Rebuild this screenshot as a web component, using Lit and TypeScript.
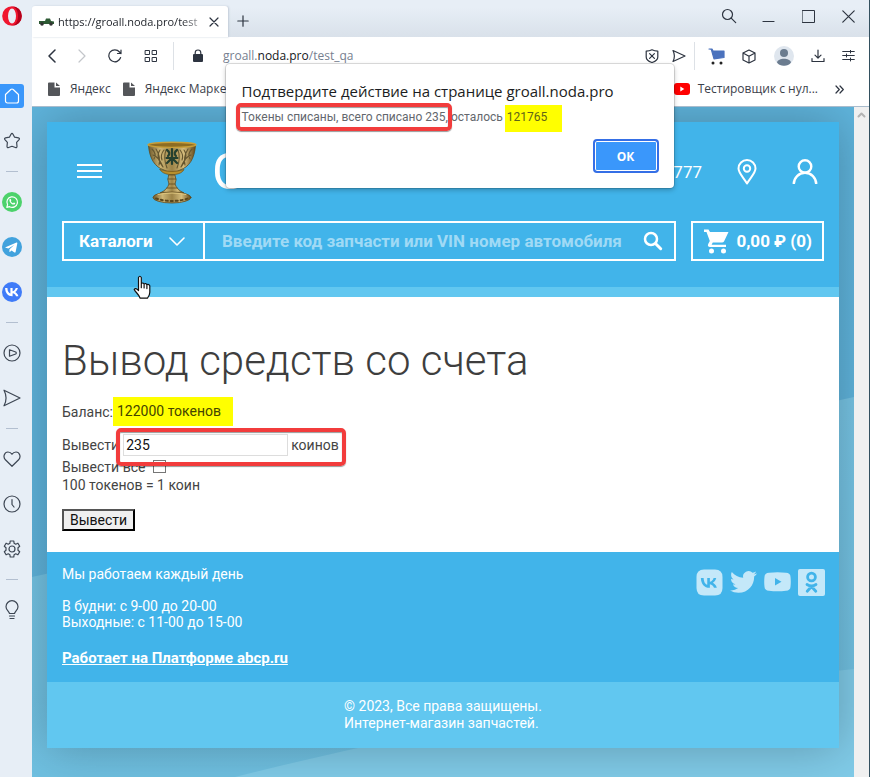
import { LitElement, html, css, svg, nothing } from "lit";
import { customElement, state } from "lit/decorators.js";

/* ---------- icons ---------- */

const icon = (w: number, h: number, body: unknown, box = `0 0 ${w} ${h}`) => html`
  <svg class="icon" width=${w} height=${h} viewBox=${box} fill="none" stroke="currentColor"
    stroke-width="1.2" stroke-linecap="round" stroke-linejoin="round" aria-hidden="true">${body}</svg>`;

const vkGlyph = svg`<path stroke="none" fill="currentColor" d="M9.6 14.4C5.2 14.4 2.500 11.300 2.400 6.200h2.300c.1 3.700 1.700 5.300 3 5.600V6.200h2.200v3.200c1.300-.1 2.700-1.600 3.100-3.200h2.200c-.3 1.900-1.800 3.400-2.800 4 1 .5 2.700 1.800 3.300 4.200h-2.400c-.5-1.500-1.700-2.700-3.400-2.900v2.900z"/>`;

const icons = {
  opera: icon(20, 20, svg`<ellipse cx="10" cy="10" rx="9.800" ry="9.800" fill="#f0162f" stroke="none"/><path d="M10 .2a9.800 9.800 0 0 1 0 19.600c4-1 6-5 6-9.800S14 1.200 10 .2z" fill="#b3001b" stroke="none"/><ellipse cx="10" cy="10" rx="4" ry="7.600" fill="#e7eef6" stroke="none"/>`),
  home: icon(24, 24, svg`<path d="M5.500 10.500 10.800 5.500q1.200-1 2.400 0l5.300 5v6.500a2 2 0 0 1-2 2h-9a2 2 0 0 1-2-2z"/>`),
  star: icon(18, 18, svg`<path d="M8 2.200q1-1.600 2 0l1.600 3 3.900.7q1.500.4.600 1.700l-2.500 2.700.4 4q0 1.800-1.600 1.200L9 14.300l-3.400 1.200q-1.600.6-1.600-1.200l.4-4-2.500-2.700q-.9-1.300.6-1.700l3.900-.7z"/>`),
  whatsapp: icon(20, 20, svg`<circle cx="10" cy="10" r="10" fill="#4cd26b" stroke="none"/><path stroke="#fff" d="m4.800 15.400.8-2.700a5.300 5.300 0 1 1 2 2z"/><path fill="#fff" stroke="none" d="M7.600 7.200c.5-.6 1-.4 1.200.1l.5 1c0 .4-.4.700-.5.900.5 1 1.200 1.500 2.100 2 .3 0 .6-.8.900-.8l1.300.6c.3.300 0 1.200-.8 1.500-2.300.7-5.600-2.600-4.700-5.300z"/>`),
  telegram: icon(20, 20, svg`<circle cx="10" cy="10" r="10" fill="#41a2dd" stroke="none"/><path fill="#fff" stroke="none" d="m3.500 10.200 11-4.700c.7-.2 1 .1.800.9l-1.700 8.500c-.2.700-.6.800-1.200.5l-2.800-2-1.500 1.400c-.4.300-.7.200-.7-.3l.1-2.200 4.700-4.300-5.800 3.600-2.600-.8c-.6-.2-.6-.4-.3-.6z"/>`),
  vk: icon(20, 20, svg`<circle cx="10" cy="10" r="10" fill="#3f7bf8" stroke="none"/><g color="#fff" transform="translate(.7 -.2)">${vkGlyph}</g>`),
  play: icon(18, 18, svg`<circle cx="9" cy="9" r="8"/><path d="M6.500 5.800v6.400l6.200-2.200q1.200-1 0-2z"/>`),
  send: icon(18, 18, svg`<path d="M1 1.200 17 9 1 16.800C3.800 11.500 3.800 6.500 1 1.200z"/>`),
  heart: icon(18, 18, svg`<path d="M9 16.300 2.400 9.800C-.5 6.500 1.600 2 5 2c2 0 3.200 1 4 2.300C9.800 3 11 2 13 2c3.400 0 5.500 4.500 2.600 7.800z"/>`),
  clock: icon(18, 18, svg`<circle cx="9" cy="9" r="8"/><path d="M9 4.500v5l2 2.500"/>`),
  gear: icon(18, 18, svg`<circle cx="9" cy="9" r="3"/><path d="M7.200 1h3.600l.3 2.300 1.600.9 2.200-1 1.800 3.100L15 7.700v2.600l1.700 1.400-1.800 3.100-2.200-1-1.600.9-.3 2.300H7.200l-.3-2.300-1.600-.9-2.200 1-1.800-3.100L3 10.300V7.700L1.300 6.300l1.800-3.100 2.200 1 1.600-.9z"/>`),
  bulb: icon(16, 20, svg`<path d="M5.500 13.500C5 11.500 2 10 2 6.700a6 6 0 0 1 12 0c0 3.300-3 4.800-3.500 6.800zM5.500 16h5M6 18.500h4"/>`),
  car: icon(15, 8, svg`<path fill="#2d5a34" stroke="none" d="M0 3h6l1-2.500h4L12 3l3 .5V6H0z"/><circle cx="3" cy="6" r="1.800" fill="#333" stroke="none"/><circle cx="12" cy="6" r="1.800" fill="#333" stroke="none"/>`),
  close: icon(10, 10, svg`<path d="m1 1 8 8M9 1 1 9"/>`),
  plus: icon(12, 12, svg`<path d="M6 .8v10.400M.8 6h10.400"/>`),
  search: icon(16, 16, svg`<circle cx="6.500" cy="6.500" r="5"/><path d="m10.200 10.200 4.500 4.500"/>`),
  min: icon(13, 13, svg`<path d="M1 11.500h11"/>`),
  max: icon(13, 13, svg`<path d="M.5.500h12v12H.5z" stroke-width="1"/>`),
  winClose: icon(13, 13, svg`<path d="m.8.8 11.400 11.400M12.200.8.800 12.200"/>`),
  back: icon(8, 14, svg`<path stroke-width="1.500" d="M7 1 1 7l6 6"/>`),
  forward: icon(8, 14, svg`<path stroke="#c3c6ca" d="m1 1 6 6-6 6"/>`),
  reload: icon(14, 14, svg`<path d="M12.600 8.500A6 6 0 1 1 11.500 3l1.500 1.500M13 1v3.500H9.500"/>`),
  tiles: icon(14, 14, svg`<path stroke-width="1" d="M1.500 1.500h4v4h-4zM8.500 1.500h4v4h-4zM1.500 8.500h4v4h-4zM8.500 8.500h4v4h-4z"/>`),
  lock: icon(10, 14, svg`<rect x="0" y="5" width="10" height="8" rx="1" fill="currentColor" stroke="none"/><path d="M2.200 6V3.800a2.800 2.800 0 0 1 5.600 0V6"/>`),
  shield: icon(14, 14, svg`<path d="M7 .8c2 1 4 1.300 5.800 1.300V8c0 2.500-2 4.300-5.800 5.500C3.200 12.300 1.200 10.500 1.200 8V2.100C3 2.100 5 1.800 7 .8zM4.600 4.600l4.800 4.800M9.400 4.600 4.600 9.400"/>`),
  sendSmall: icon(14, 14, svg`<path d="M1 1.500 13 7 1 12.500C3 8.500 3 5.500 1 1.500z"/>`),
  cartBlue: icon(17, 17, svg`<path fill="#4b72bd" stroke="#4b72bd" d="M1 1h3l1 2h11v6.500L6 10.800 3.500 2"/><circle cx="5" cy="15" r="1.500" fill="#222" stroke="none"/><circle cx="13" cy="15" r="1.500" fill="#222" stroke="none"/>`),
  cube: icon(14, 15, svg`<path d="m7 1 6 3v7l-6 3-6-3V4zM1 4l6 3.200L13 4M7 7.200V14"/>`),
  avatar: icon(20, 20, svg`<circle cx="10" cy="10" r="10" fill="#dfe6ee" stroke="none"/><circle cx="10" cy="7" r="4" fill="#6b7c8f" stroke="none"/><path d="M3 16.500c1-5 13-5 14 0-3 4.400-11 4.400-14 0z" fill="#6b7c8f" stroke="none"/>`),
  download: icon(14, 14, svg`<path d="M7 1v8M4 6.200l3 3 3-3M1 9.500v3h12v-3"/>`),
  sliders: icon(13, 12, svg`<path stroke-width="1" d="M.7 1.500h11.600M.7 5.500h11.600M.7 9.500h11.600M8.500 0v3M4.500 4v3M8.500 8v3"/>`),
  doc: icon(12, 14, svg`<path fill="#54565a" stroke="none" d="M0 1.500Q0 .5 1 .5h5.500V5.500H12V13q0 1-1 1H1q-1 0-1-1zM8 .5 12 4H8z"/>`),
  youtube: icon(16, 12, svg`<rect width="16" height="12" rx="3" fill="#f00" stroke="none"/><path d="m6.300 3.500 4 2.500-4 2.500z" fill="#fff" stroke="none"/>`),
  more: icon(9, 9, svg`<path d="M1 1 4.300 4.500 1 8M5 1l3.300 3.500L5 8"/>`),
  scrollUp: icon(9, 6, svg`<path stroke="#b4b4b4" stroke-width="2" d="m1.500 4.500 3-3 3 3"/>`),
  menu: icon(25, 16, svg`<path stroke-width="2" stroke-linecap="butt" d="M0 1h25M0 7h25M0 13h25"/>`),
  pin: icon(20, 26, svg`<path stroke-width="2" d="M10 24.500C6.500 18.500 1.500 14 1.500 9.500a8.500 8.500 0 0 1 17 0c0 4.500-5 9-8.500 15z"/><circle cx="10" cy="9.500" r="3.200" stroke-width="2"/>`),
  user: icon(26, 26, svg`<circle cx="13" cy="7.500" r="6.300" stroke-width="2.400"/><path stroke-width="2.400" stroke-linecap="butt" d="M1.800 25a11.200 11.200 0 0 1 22.400 0"/>`),
  chevron: icon(16, 9, svg`<path stroke-width="1.600" d="m1 1 7 7 7-7"/>`),
  find: icon(20, 20, svg`<circle cx="8" cy="8" r="6" stroke-width="2.500"/><path stroke-width="3" d="m12.700 12.700 5 5"/>`),
  cart: icon(25, 25, svg`<path fill="currentColor" stroke="none" d="M0 .5h4.500L6 3h18.500l-4.500 9.500q-.6 1-2 1H8.800l-1.200 2.300H22V18H6q-3-.5-1.800-3l1.600-3L2.500 3H0zM7.500 19.600a2.500 2.500 0 1 1 0 5 2.500 2.500 0 0 1 0-5zm12 0a2.500 2.500 0 1 1 0 5 2.500 2.500 0 0 1 0-5z"/>`),
  pointer: icon(18, 25, svg`<path fill="#fff" stroke="#111" stroke-width="1.200" d="M5.500 15.500V2.500q1.300-2.500 2.800 0v6.200q1.500-1.500 2.800.3 1.800-1.200 2.800.6 2-.8 2.900 1.200v6.500q0 3-2.300 5.900H7.200C6 19.500 2.300 17 1.200 14.500q1.300-2.300 4.300 1zM8.300 8.700v4M11.100 9v4M13.900 9.600v4"/>`),
  goblet: icon(50, 64, svg`
    <defs>
      <linearGradient id="gold" x1="0" x2="1"><stop offset="0" stop-color="#6f5a2c"/><stop offset=".25" stop-color="#ccb575"/><stop offset=".5" stop-color="#9c8347"/><stop offset=".75" stop-color="#d3bb7c"/><stop offset="1" stop-color="#64491a"/></linearGradient>
    </defs>
    <g transform="translate(0 1)">
    <path fill="url(#gold)" stroke="#5f4a1e" stroke-width=".8" d="M1.500 4.500C2.500 18 8 26 17 29l4 2h8l4-2C42 26 47.500 18 48.500 4.500z"/>
    <ellipse cx="25" cy="3.800" rx="24" ry="2.600" fill="#8d6c22" stroke="#c9a03a" stroke-width="1.400"/>
    <path stroke="#65562f" stroke-width="1.100" d="M5 8q5 5 2 10M9 8q5 8 3 16M13 9q-5 6 3 17M17 9q-4 5-2 10M6 14q6 2 10 12M19 9q-3 8 1 18M31 9q3 8-1 18M44 14q-6 2-10 12M45 8q-5 5-2 10M41 8q-5 8-3 16M37 9q5 6-3 17M33 9q4 5 2 10"/>
    <path stroke="#25402f" stroke-width="2.200" d="M25 8v15M20 9q4 3 1 6M30 9q-4 3-1 6M19.500 17h11M20 22l5-5 5 5"/>
    <path fill="#b8902c" stroke="#76581c" stroke-width=".8" d="M13 28.500q12 4 24 0-2 4-9 5h-6q-7-1-9-5z"/>
    <path fill="url(#gold)" stroke="#5f4a1e" stroke-width=".8" d="M22 34h6l1 5-1 4q2 6 9 9H13q7-3 9-9l-1-4z"/>
    <path stroke="#5f4a1e" stroke-width=".8" d="M21 38h8M22 43h6M20 47h10"/>
    <ellipse cx="25" cy="56.500" rx="19" ry="5.500" fill="url(#gold)" stroke="#5f4a1e" stroke-width=".8"/>
    <path stroke="#5a451b" stroke-width="2" stroke-dasharray="2 3" d="M9 57.500q16 5 32 0"/>
    <path stroke="#e0c77f" stroke-width="1" d="M11 53.500q14-3 28 0"/>
    </g>`),
  vkTile: icon(27, 27, svg`<path fill="#c4e8f9" stroke="none" d="M8 .5h11q7.500 0 7.500 7.500v11q0 7.500-7.500 7.500H8Q.5 26.500.5 19V8Q.5.500 8 .5z"/><g color="#41b4ea" transform="translate(2 1.500) scale(1.200)">${vkGlyph}</g>`),
  twitter: icon(27, 27, svg`<path fill="#c4e8f9" stroke="none" transform="translate(0 -.5) scale(1.120)" d="M23.950 4.570a10 10 0 0 1-2.820.78 4.960 4.960 0 0 0 2.160-2.730c-.95.56-2 .96-3.120 1.190a4.920 4.920 0 0 0-8.390 4.480C7.690 8.100 4.070 6.130 1.640 3.160a4.820 4.820 0 0 0-.67 2.480c0 1.710.87 3.210 2.190 4.100a4.900 4.900 0 0 1-2.230-.62v.06a4.920 4.920 0 0 0 3.950 4.830 5 5 0 0 1-2.210.08 4.940 4.940 0 0 0 4.600 3.420A9.870 9.870 0 0 1 0 19.540a13.990 13.990 0 0 0 7.550 2.210c9.050 0 14-7.500 14-13.980 0-.21 0-.42-.02-.63a9.940 9.940 0 0 0 2.460-2.550z"/>`),
  youtubeTile: icon(27, 27, svg`<path fill="#c4e8f9" stroke="none" d="M5 3.800q8.500-1 17 0 4.300.3 4.500 4 .6 5 0 10-.2 3.700-4.500 4-8.500 1-17 0-4.300-.3-4.500-4-.6-5 0-10 .2-3.700 4.500-4z"/><path d="m11 9 6.500 3.800-6.500 3.800z" fill="#41b4ea" stroke="none"/>`),
  okTile: icon(27, 27, svg`<rect width="27" height="27" rx="2" fill="#c4e8f9" stroke="none"/><g stroke="#41b4ea" stroke-width="2.800"><circle cx="13.500" cy="8" r="3.900"/><path d="M9 15.500q4.500 3 9 0M13.500 17.500 9.200 22.300M13.500 17.500l4.300 4.800"/></g>`),
};

/* ---------- browser sidebar ---------- */

type SideItem = { label: string; art: unknown; active?: boolean } | null;

const sideItems: SideItem[] = [
  { label: "Главная", art: icons.home, active: true },
  { label: "Закладки", art: icons.star },
  null,
  { label: "WhatsApp", art: icons.whatsapp },
  { label: "Telegram", art: icons.telegram },
  { label: "VK", art: icons.vk },
  null,
  { label: "Плеер", art: icons.play },
  { label: "Мой поток", art: icons.send },
  null,
  { label: "Избранное", art: icons.heart },
  { label: "История", art: icons.clock },
  { label: "Настройки", art: icons.gear },
  null,
  { label: "Подсказки", art: icons.bulb },
];

const reset = css`
  *, *::before, *::after { box-sizing: border-box; }
  button { font: inherit; color: inherit; background: none; border: 0; padding: 0; margin: 0; cursor: pointer; }
  .icon { display: block; flex: none; }
`;

@customElement("side-bar")
class SideBar extends LitElement {
  static styles = [reset, css`
    :host { display: block; width: 32px; flex: none; background: #e7eef6; color: #3d4653; }
    .logo { height: 73px; padding: 6px 0 0 2px; }
    .list { display: flex; flex-direction: column; width: 24px; }
    .item { display: grid; place-items: center; width: 24px; height: 45px; }
    .tile { display: grid; place-items: center; width: 24px; height: 24px; }
    .active { background: #3a97fb; color: #fff; border-radius: 0 3px 3px 0; }
    .rule { height: 16px; display: grid; place-items: center; }
    .rule::before { content: ""; width: 12px; height: 1px; background: #b3bfd0; }
  `];

  render() {
    return html`
      <div class="logo">${icons.opera}</div>
      <nav class="list">
        ${sideItems.map((it) => it
          ? html`<button class="item" aria-label=${it.label}><span class="tile ${it.active ? "active" : ""}">${it.art}</span></button>`
          : html`<div class="rule"></div>`)}
      </nav>`;
  }
}

/* ---------- tabs, address bar, bookmarks ---------- */

@customElement("browser-chrome")
class BrowserChrome extends LitElement {
  static styles = [reset, css`
    :host { display: block; color: #2d3440; font-family: "Open Sans", "Noto Sans", sans-serif; font-size: 12px; line-height: 16px; background: #fff; border-bottom: 1px solid #a9bccd; }
    .tabs { display: flex; align-items: center; height: 37px; background: linear-gradient(#e7eef6 20%, #d9e1ea); }
    .tab { align-self: flex-end; display: flex; align-items: center; gap: 4px; width: 196px; height: 31px; padding: 0 9px 0 7px; background: #fff; border-radius: 3px 3px 0 0; box-shadow: 1px 0 2px #c3ccd8; }
    .title { flex: 1; font-size: 11px; white-space: nowrap; color: #1c2027; -webkit-mask-image: linear-gradient(90deg, #000 84%, #0003); mask-image: linear-gradient(90deg, #000 84%, #0003); }
    .new { margin: 5px 0 0 9px; }
    .window { display: flex; align-items: center; gap: 27px; margin: 0 14px 5px auto; }
    .window .first { margin-right: -2px; }
    .bar { display: flex; align-items: center; height: 38px; padding: 0 14px 0 16px; }
    .nav { display: flex; align-items: center; width: 126px; padding-right: 15px; justify-content: space-between; height: 28px; border-right: 1px solid #dde1e6; }
    .address { display: flex; align-items: center; gap: 20px; flex: 1; padding: 0 8px 0 19px; border-right: 1px solid #dde1e6; height: 28px; }
    .url { flex: 1; font-size: 12px; color: #76808f; }
    .host { color: #14171c; }
    .address .pair { display: flex; gap: 13px; }
    .tools { display: flex; align-items: center; justify-content: space-between; width: 160px; padding-left: 13px; }
    .marks { display: flex; align-items: center; height: 31px; padding: 0 25px 3px 16px; }
    .mark { display: flex; align-items: center; gap: 10px; margin-right: 12px; color: #3b414b; text-decoration: none; white-space: nowrap; }
    .mark:nth-child(3) { margin-left: auto; gap: 8px; margin-right: 17px; }
  `];

  render() {
    return html`
      <div class="tabs">
        <div class="tab">${icons.car}<span class="title">https://groall.noda.pro/test</span><button aria-label="Закрыть вкладку">${icons.close}</button></div>
        <button class="new" aria-label="Новая вкладка">${icons.plus}</button>
        <div class="window">
          <button class="first" aria-label="Поиск">${icons.search}</button>
          <button aria-label="Свернуть">${icons.min}</button>
          <button aria-label="Развернуть">${icons.max}</button>
          <button aria-label="Закрыть">${icons.winClose}</button>
        </div>
      </div>
      <div class="bar">
        <div class="nav">
          <button aria-label="Назад">${icons.back}</button>
          <button aria-label="Вперёд">${icons.forward}</button>
          <button aria-label="Обновить">${icons.reload}</button>
          <button aria-label="Экспресс-панель">${icons.tiles}</button>
        </div>
        <div class="address">
          ${icons.lock}
          <span class="url">groall.<span class="host">noda.pro</span>/test_qa</span>
          <span class="pair">
            <button aria-label="Блокировка рекламы">${icons.shield}</button>
            <button aria-label="Отправить">${icons.sendSmall}</button>
          </span>
        </div>
        <div class="tools">
          <button aria-label="Покупки">${icons.cartBlue}</button>
          <button aria-label="Расширения">${icons.cube}</button>
          <button aria-label="Профиль">${icons.avatar}</button>
          <button aria-label="Загрузки">${icons.download}</button>
          <button aria-label="Простая настройка">${icons.sliders}</button>
        </div>
      </div>
      <div class="marks">
        <a class="mark" href="#">${icons.doc}Яндекс</a>
        <a class="mark" href="#">${icons.doc}Яндекс Маркет</a>
        <a class="mark" href="#">${icons.youtube}Тестировщик с нул...</a>
        <button aria-label="Ещё">${icons.more}</button>
      </div>`;
  }
}

/* ---------- confirmation dialog ---------- */

@customElement("alert-dialog")
class AlertDialog extends LitElement {
  static styles = [reset, css`
    :host { display: block; font-family: "Open Sans", "Noto Sans", sans-serif; }
    .box { display: flex; flex-direction: column; width: 448px; padding: 15px 15px 15px 16px; background: #fff; border-radius: 4px; box-shadow: 0 0 0 1px #0000001f, 0 2px 5px #00000040; }
    .heading { margin: 0 0 2px; font-size: 15px; line-height: 24px; font-weight: 400; color: #1b1d21; white-space: nowrap; }
    .text { display: flex; align-items: baseline; margin: 0; height: 27px; font-family: Roboto, "Open Sans", sans-serif; font-size: 12px; line-height: 16px; color: #63676d; white-space: nowrap; }
    .framed { position: relative; margin-right: 3px; }
    .framed::after { content: ""; position: absolute; inset: -6px -4px -6px -6px; border: 4px solid #f23c3c; border-radius: 5px; box-shadow: 0 1px 1px #0006, inset 0 1px 1px #0006; }
    .marked { background: #ff0; color: #5f6418; margin-left: 2px; padding: 4px 15px 7px 2px; }
    .ok { align-self: flex-end; width: 66px; height: 34px; margin-top: 7px; border: 2px solid #356fe6; border-radius: 4px; background: #3a97fb; box-shadow: inset 0 0 0 1px #fff; color: #fff; font-size: 12px; font-weight: 700; }
  `];

  render() {
    return html`
      <section class="box" role="alertdialog" aria-labelledby="heading" aria-describedby="text">
        <h2 class="heading" id="heading">Подтвердите действие на странице groall.noda.pro</h2>
        <p class="text" id="text"><span class="framed">Токены списаны, всего списано 235,</span> осталось <mark class="marked">121765</mark></p>
        <button class="ok" @click=${() => this.dispatchEvent(new Event("confirm"))}>ОК</button>
      </section>`;
  }
}

/* ---------- shop page ---------- */

@customElement("shop-page")
class ShopPage extends LitElement {
  static styles = [reset, css`
    :host { display: block; background: #fff; color: #444; font-family: Roboto, "Liberation Sans", sans-serif; font-size: 14px; line-height: 18px; box-shadow: 0 0 45px #00000040; }
    .head { background: #41b4ea; color: #fff; padding: 0 15px 26px; border-bottom: 10px solid #61c7f0; box-sizing: border-box; }
    .top { display: flex; align-items: center; height: 99px; padding: 0 6px 0 15px; }
    .brand { display: flex; align-items: center; gap: 15px; margin-left: 45px; color: inherit; text-decoration: none; }
    .name { font-size: 50px; line-height: 60px; }
    .contacts { display: flex; align-items: center; margin-left: auto; font-size: 17px; }
    .contacts .where { margin-left: 35px; }
    .contacts .who { margin-left: 35px; }
    .find { display: flex; gap: 15px; height: 40px; font-size: 17px; font-weight: 700; }
    .search { display: flex; flex: 1; min-width: 0; border: 2px solid #fff; }
    .catalog { display: flex; align-items: center; justify-content: space-between; width: 141px; padding: 0 18px 0 15px; border-right: 2px solid #fff; }
    .query { flex: 1; min-width: 0; border: 0; background: none; padding: 0 0 0 17px; font: inherit; color: #fff; outline: 0; }
    .query::placeholder { color: #a0daf5; opacity: 1; }
    .go { padding: 0 11px 0 6px; }
    .basket { display: flex; align-items: center; justify-content: space-between; width: 133px; padding: 0 10px 0 11px; border: 2px solid #fff; }
    .body { padding: 42px 15px 21px; }
    .title { margin: 0 0 14px; font-size: 42px; line-height: 44px; font-weight: 300; color: #3e3e3e; }
    .balance { display: flex; align-items: center; height: 29px; margin: 0 0 8px; }
    .amount { background: #ff0; color: #444400; padding: 5px 12px 6px 4px; }
    .row { display: flex; align-items: center; }
    .sum { height: 22px; margin-bottom: 2px; }
    .framed { position: relative; display: flex; align-items: center; gap: 3px; margin-left: 4px; }
    .framed::after { content: ""; position: absolute; inset: -6px -7px -10px -7px; border: 4px solid #f23c3c; border-radius: 5px; box-shadow: 0 1px 1px #0006, inset 0 1px 1px #0006; pointer-events: none; }
    .coins { width: 165px; height: 22px; padding: 0 2px; border: 1px solid #ddd; font: inherit; color: #111; background: #fff; outline: 0; }
    .all { appearance: none; width: 13px; height: 13px; margin: 0 0 2px 8px; border: 1px solid #767676; background: #fff; }
    .send { height: 22px; width: 73px; margin-top: 15px; background: #efefef; color: #111; border: 2px solid; border-color: #555 #000 #000 #555; line-height: 16px; }
    .foot { display: flex; justify-content: space-between; align-items: flex-start; padding: 14px 14px 16px 15px; background: #41b4ea; color: #fff; line-height: 16px; }
    .foot p { margin: 0 0 16px; }
    .foot .hours { margin-bottom: 20px; }
    .link { color: #fff; font-size: 15px; font-weight: 700; display: block; }
    .social { display: flex; gap: 7px; padding-top: 3px; }
    .legal { display: flex; justify-content: center; padding: 16px 0; background: #61c7f0; color: #fff; line-height: 17px; }
    .legal p { margin: 0; }
  `];

  render() {
    return html`
      <header class="head">
        <div class="top">
          <button aria-label="Меню">${icons.menu}</button>
          <a class="brand" href="#">${icons.goblet}<span class="name">G</span></a>
          <div class="contacts">
            <span>777</span>
            <button class="where" aria-label="Адрес">${icons.pin}</button>
            <button class="who" aria-label="Личный кабинет">${icons.user}</button>
          </div>
        </div>
        <div class="find">
          <div class="search">
            <button class="catalog">Каталоги ${icons.chevron}</button>
            <input class="query" type="text" aria-label="Поиск запчасти" placeholder="Введите код запчасти или VIN номер автомобиля">
            <button class="go" aria-label="Найти">${icons.find}</button>
          </div>
          <button class="basket">${icons.cart}<span>0,00 ₽ (0)</span></button>
        </div>
      </header>
      <main class="body">
        <h1 class="title">Вывод средств со счета</h1>
        <p class="balance">Баланс:<mark class="amount">122000 токенов</mark></p>
        <div class="row sum"><label for="coins">Вывести</label><span class="framed"><input class="coins" id="coins" type="text" value="235">коинов</span></div>
        <div class="row"><label for="all">Вывести все</label><input class="all" id="all" type="checkbox"></div>
        <div>100 токенов = 1 коин</div>
        <button class="send">Вывести</button>
      </main>
      <footer>
        <div class="foot">
          <div>
            <p>Мы работаем каждый день</p>
            <p class="hours">В будни: с 9-00 до 20-00<br>Выходные: с 11-00 до 15-00</p>
            <a class="link" href="#">Работает на Платформе abcp.ru</a>
          </div>
          <div class="social">
            <a href="#" aria-label="ВКонтакте">${icons.vkTile}</a>
            <a href="#" aria-label="Twitter">${icons.twitter}</a>
            <a href="#" aria-label="YouTube">${icons.youtubeTile}</a>
            <a href="#" aria-label="Одноклассники">${icons.okTile}</a>
          </div>
        </div>
        <div class="legal"><p>© 2023, Все права защищены.<br>Интернет-магазин запчастей.</p></div>
      </footer>`;
  }
}

/* ---------- window ---------- */

@customElement("app-root")
class AppRoot extends LitElement {
  @state() private open = true;

  static styles = [reset, css`
    :host { display: flex; min-height: 100vh; overflow: hidden; }
    .window { position: relative; display: flex; flex-direction: column; flex: 1; min-width: 0; border-right: 1px solid #33505f; }
    .view { display: flex; flex: 1; }
    .page { position: relative; flex: 1; min-width: 0; padding: 15px 15px 29px; overflow: hidden; }
    .backdrop { position: absolute; inset: 0; width: 100%; height: 100%; }
    .page shop-page { position: relative; }
    .scroll { width: 15px; background: #f0f0f0; display: flex; justify-content: center; padding-top: 5px; }
    .dialog { position: absolute; top: 64px; left: 0; right: 2px; display: flex; justify-content: center; }
    .pointer { position: absolute; left: 101px; top: 275px; pointer-events: none; }
  `];

  render() {
    return html`
      <side-bar></side-bar>
      <div class="window">
        <browser-chrome></browser-chrome>
        <div class="view">
          <div class="page">
            <svg class="backdrop" viewBox="0 0 822 670" preserveAspectRatio="none" aria-hidden="true">
              <defs>
                <linearGradient id="sky" x1="0" x2="0" y1="0" y2="1"><stop offset="0" stop-color="#5fb4dc"/><stop offset="1" stop-color="#5fb2da"/></linearGradient>
                <linearGradient id="low" x1="0" x2="0" y1="0" y2="1"><stop offset="0" stop-color="#77c4e4"/><stop offset="1" stop-color="#6fc0e1"/></linearGradient>
              </defs>
              <rect width="822" height="670" fill="url(#sky)"/>
              <path d="M0 470 822 290V670H0z" fill="url(#low)"/>
              <path d="M203 670Q500 595 822 562V670z" fill="#80cbe8"/>
            </svg>
            <shop-page></shop-page>
          </div>
          <div class="scroll">${icons.scrollUp}</div>
        </div>
        ${this.open ? html`<div class="dialog"><alert-dialog @confirm=${() => (this.open = false)}></alert-dialog></div>` : nothing}
        <div class="pointer">${icons.pointer}</div>
      </div>`;
  }
}
